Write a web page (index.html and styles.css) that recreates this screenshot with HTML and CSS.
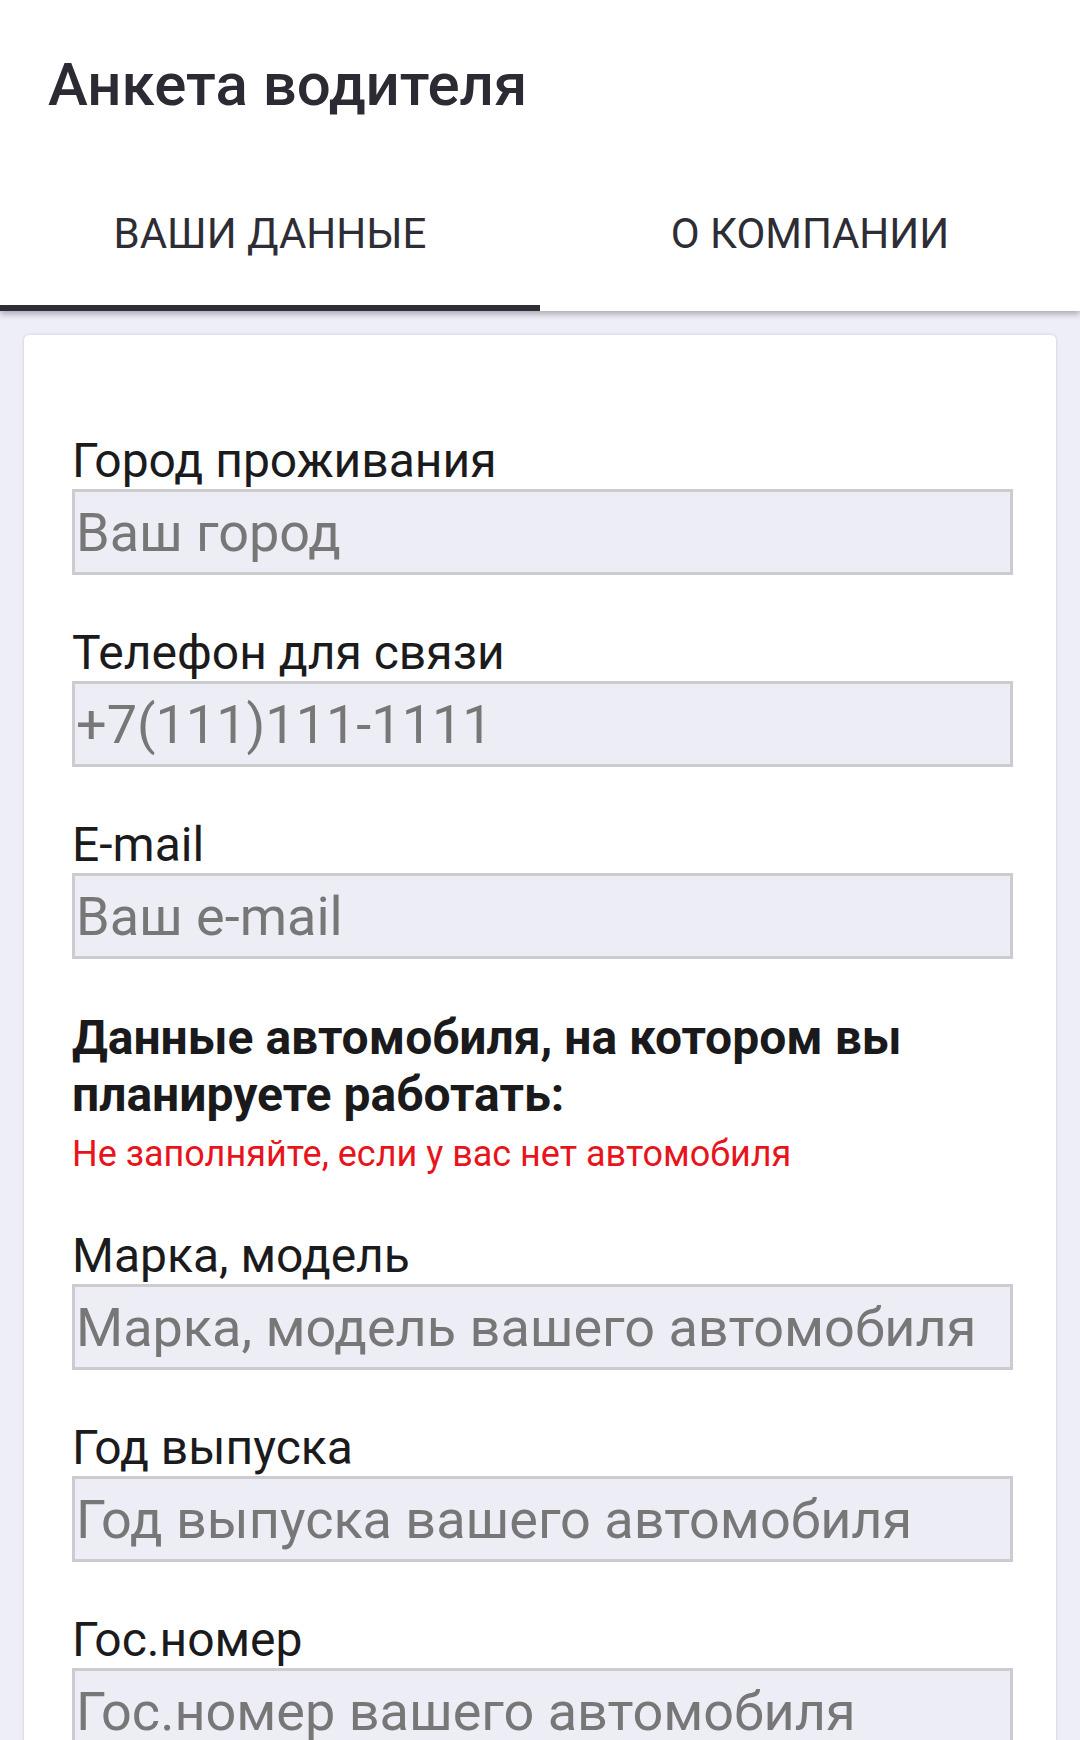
FILE: index.html
```html
<!DOCTYPE html>
<html lang="ru">
<head>
<meta charset="utf-8">
<title>Анкета водителя</title>
<link rel="stylesheet" href="styles.css">
</head>
<body>
<header class="header">
  <h1 class="title">Анкета водителя</h1>
  <nav class="tabs">
    <div class="tab tab-active">ВАШИ ДАННЫЕ</div>
    <div class="tab">О КОМПАНИИ</div>
  </nav>
</header>
<main class="main">
  <form class="card">
    <div class="field">
      <label class="label">Город проживания</label>
      <input class="input" type="text" placeholder="Ваш город">
    </div>
    <div class="field">
      <label class="label">Телефон для связи</label>
      <input class="input" type="text" placeholder="+7(111)111-1111">
    </div>
    <div class="field">
      <label class="label">E-mail</label>
      <input class="input" type="text" placeholder="Ваш e-mail">
    </div>
    <h2 class="section-title">Данные автомобиля, на котором вы планируете работать:</h2>
    <p class="note">Не заполняйте, если у вас нет автомобиля</p>
    <div class="field field-car">
      <label class="label">Марка, модель</label>
      <input class="input" type="text" placeholder="Марка, модель вашего автомобиля">
    </div>
    <div class="field">
      <label class="label">Год выпуска</label>
      <input class="input" type="text" placeholder="Год выпуска вашего автомобиля">
    </div>
    <div class="field">
      <label class="label">Гос.номер</label>
      <input class="input" type="text" placeholder="Гос.номер вашего автомобиля">
    </div>
  </form>
</main>
</body>
</html>
```

FILE: styles.css
```css
* {
  box-sizing: border-box;
}

html, body {
  margin: 0;
  padding: 0;
}

body {
  width: 1080px;
  min-height: 1740px;
  background: #eeeef7;
  font-family: Roboto, "Noto Sans", "Liberation Sans", sans-serif;
  overflow: hidden;
}

.header {
  position: relative;
  z-index: 1;
  background: #ffffff;
  box-shadow: 0 3px 6px rgba(40, 40, 60, 0.35);
}

.title {
  margin: 0;
  padding: 50px 0 0 48px;
  font-size: 60px;
  line-height: 70px;
  font-weight: 500;
  color: #2c2b33;
}

.tabs {
  display: flex;
}

.tab {
  flex: 1 1 0;
  text-align: center;
  padding-top: 88px;
  height: 191px;
  font-size: 42px;
  line-height: 52px;
  font-weight: 400;
  color: #2e2d35;
  border-bottom: 6px solid transparent;
}

.tab-active {
  border-bottom-color: #2f2e36;
}

.main {
  padding: 24px 24px 0;
}

.card {
  background: #ffffff;
  border-radius: 5px;
  box-shadow: 0 0 3px rgba(120, 110, 170, 0.35);
  padding: 98px 43px 60px 48px;
  min-height: 1500px;
}

.field {
  display: flex;
  flex-direction: column;
  margin-bottom: 50px;
}

.field-car {
  margin-top: 53px;
}

.label {
  font-size: 48px;
  line-height: 56px;
  color: #1b1b1d;
}

.input {
  width: 100%;
  height: 86px;
  margin: 0;
  padding: 0 1px;
  border: 3px solid #cbcbd0;
  border-radius: 0;
  background: #ededf6;
  font-family: Roboto, "Noto Sans", "Liberation Sans", sans-serif;
  font-size: 54px;
  color: #333;
  outline: none;
}

.input::placeholder {
  color: #777777;
  opacity: 1;
}

.section-title {
  margin: 0;
  font-size: 48px;
  line-height: 57px;
  font-weight: 700;
  color: #1a1a1c;
}

.note {
  margin: 10px 0 0;
  font-size: 36px;
  line-height: 42px;
  color: #e8141b;
}
```
